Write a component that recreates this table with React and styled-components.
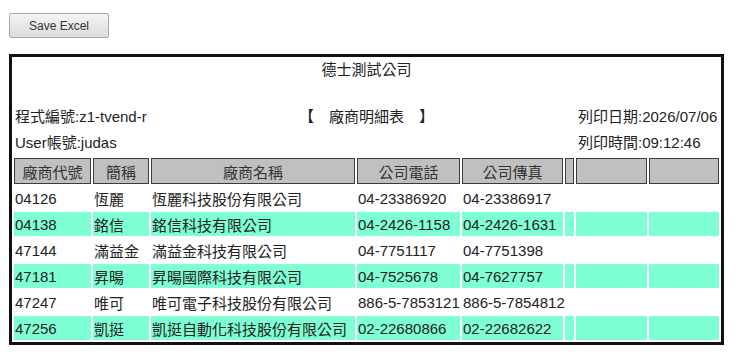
import React from "react";
import styled, { createGlobalStyle } from "styled-components";

const Global = createGlobalStyle`
  body {
    margin: 0;
    background: #fff;
    font-family: "Liberation Sans", Arial, "Noto Sans CJK TC", sans-serif;
    color: #222;
  }
`;

const Page = styled.div`
  padding: 13px 16px 0 9px;
`;

const SaveButton = styled.button`
  display: block;
  width: 100px;
  height: 25px;
  padding: 0;
  font-family: "Liberation Sans", Arial, sans-serif;
  font-size: 12px;
  color: #333;
  background: linear-gradient(#f4f4f4, #dcdcdc);
  border: 1px solid #a8a8a8;
  border-radius: 2px;
`;

const Report = styled.div`
  margin-top: 16px;
  width: 715px;
  box-sizing: border-box;
  border: 3px solid #111;
  font-size: 15px;
`;

const Title = styled.div`
  height: 25px;
  line-height: 25px;
  text-align: center;
  margin-bottom: 22px;
`;

const InfoRow = styled.div`
  display: grid;
  grid-template-columns: 1fr auto 1fr;
  height: 26px;
  line-height: 26px;
  padding: 0 3px;
  white-space: nowrap;
`;

const Right = styled.span`
  justify-self: end;
  width: 140px;
  text-align: left;
`;

const Table = styled.table`
  table-layout: fixed;
  width: 709px;
  border-spacing: 2px;
  font-size: 15px;
`;

const Th = styled.th`
  height: 24px;
  padding: 0;
  background: #c0c0c0;
  border: 1px solid #3c3c3c;
  font-weight: normal;
  color: #333;
  text-align: center;
  white-space: nowrap;
`;

const Td = styled.td`
  height: 24px;
  padding: 0 0 0 1px;
  background: ${(p) => (p.$alt ? "#7fffd4" : "transparent")};
  white-space: nowrap;
  overflow: visible;
`;

const widths = [77, 56, 204, 103, 101, 9, 71, 70];
const heads = ["廠商代號", "簡稱", "廠商名稱", "公司電話", "公司傳真", "", "", ""];

const rows = [
  ["04126", "恆麗", "恆麗科技股份有限公司", "04-23386920", "04-23386917"],
  ["04138", "銘信", "銘信科技有限公司", "04-2426-1158", "04-2426-1631"],
  ["47144", "滿益金", "滿益金科技有限公司", "04-7751117", "04-7751398"],
  ["47181", "昇暘", "昇暘國際科技有限公司", "04-7525678", "04-7627757"],
  ["47247", "唯可", "唯可電子科技股份有限公司", "886-5-7853121", "886-5-7854812"],
  ["47256", "凱挺", "凱挺自動化科技股份有限公司", "02-22680866", "02-22682622"],
];

export default function App() {
  return (
    <Page>
      <Global />
      <SaveButton>Save Excel</SaveButton>
      <Report>
        <Title>德士測試公司</Title>
        <InfoRow>
          <span>程式編號:z1-tvend-r</span>
          <span>【　廠商明細表　】</span>
          <Right>列印日期:2026/07/06</Right>
        </InfoRow>
        <InfoRow>
          <span>User帳號:judas</span>
          <span />
          <Right>列印時間:09:12:46</Right>
        </InfoRow>
        <Table>
          <colgroup>
            {widths.map((w, i) => (
              <col key={i} style={{ width: w }} />
            ))}
          </colgroup>
          <thead>
            <tr>
              {heads.map((h, i) => (
                <Th key={i}>{h}</Th>
              ))}
            </tr>
          </thead>
          <tbody>
            {rows.map((r, i) => (
              <tr key={r[0]}>
                {[...r, "", "", ""].map((c, j) => (
                  <Td key={j} $alt={i % 2 === 1}>
                    {c}
                  </Td>
                ))}
              </tr>
            ))}
          </tbody>
        </Table>
      </Report>
    </Page>
  );
}
